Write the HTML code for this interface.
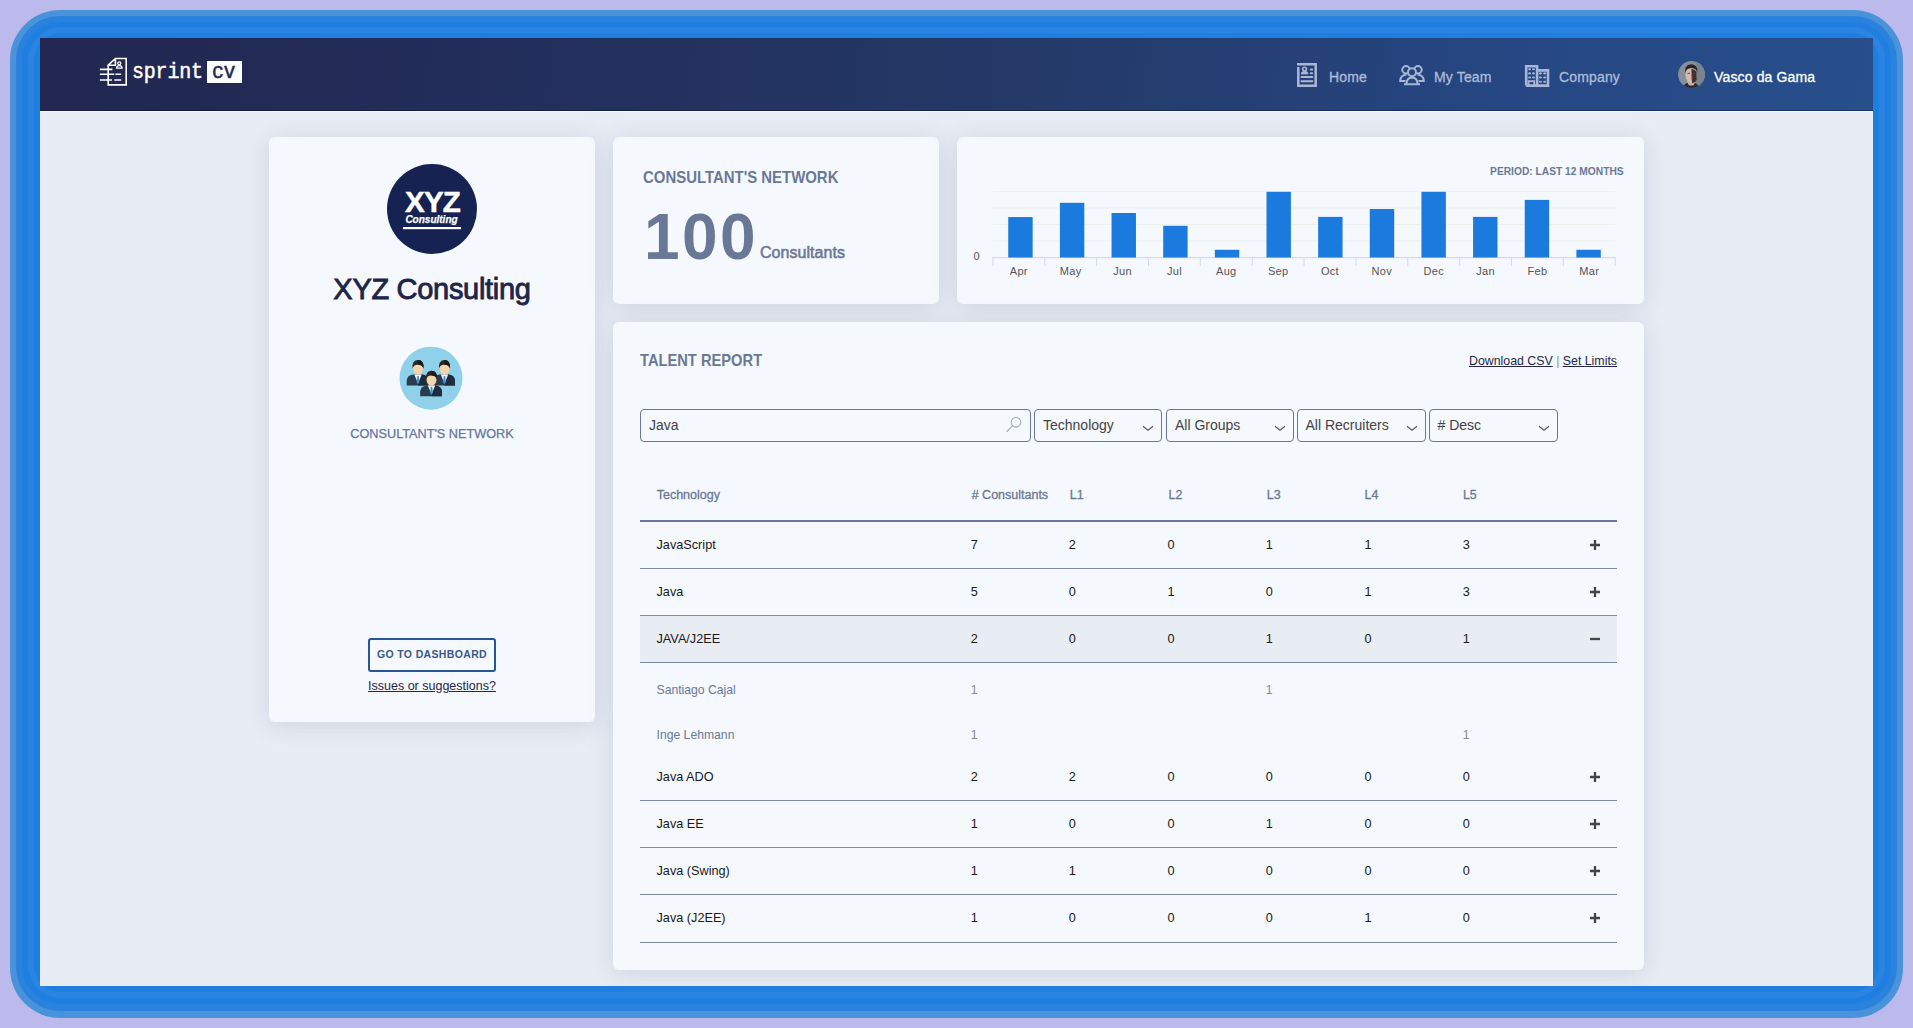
<!DOCTYPE html>
<html><head><meta charset="utf-8">
<style>
*{margin:0;padding:0;box-sizing:border-box}
html,body{width:1913px;height:1028px;overflow:hidden}
body{background:#bcb9ed;font-family:"Liberation Sans",sans-serif;position:relative}
.abs{position:absolute}
.b1{left:10px;top:10px;width:1893px;height:1008px;border-radius:50px;background:#4893d9}
.b2{left:6px;top:6px;right:6px;bottom:7px;border-radius:44px;background:#2a82de}
.b3{left:6px;top:6px;right:6px;bottom:7px;border-radius:38px;background:#1e7fe0}
.b4{left:6px;top:5px;right:6px;bottom:6px;border-radius:33px;background:#2c84e2}
.b5{left:6px;top:6px;right:6px;bottom:6px;border-radius:27px;background:#1e7fe0}
#app{left:40px;top:38px;width:1833px;height:948px;background:#e8ecf4;overflow:hidden}
#hdr{left:0;top:0;width:1833px;height:73px;background:linear-gradient(96deg,#212750 0%,#232f5c 30%,#243a69 55%,#264783 80%,#274f8c 100%);border-bottom:1px solid rgba(5,10,40,.4)}
#hdrline{left:0;top:73px;width:1833px;height:1px;background:#f4f7fb}
.card{position:absolute;background:#f5f8fc;border-radius:6px;box-shadow:0 3px 24px rgba(60,90,130,.16)}
.nav{position:absolute;top:0;height:73px;line-height:78px;font-size:14px;color:#aebbd8;-webkit-text-stroke:0.3px currentColor;letter-spacing:0.15px;white-space:nowrap}
</style></head><body>
<div class="abs b1"><div class="abs b2"><div class="abs b3"><div class="abs b4"><div class="abs b5"></div></div></div></div></div>
<div id="app" class="abs">

  <div id="hdr" class="abs">
    <svg class="abs" style="left:59px;top:19px" width="29" height="30" viewBox="0 0 29 30" fill="none" stroke="#fff" stroke-width="1.6">
      <path d="M16.4 1.5 H27.2 V27.9 H9.2 V8.2"/>
      <path d="M16.4 1.5 L9.2 8.2 H16.4 Z" stroke-linejoin="round"/>
      <circle cx="20.3" cy="6.3" r="1.5" stroke-width="1.3"/>
      <path d="M17.6 11.2 Q17.6 8.7 20.3 8.7 Q23 8.7 23 11.2 Z" stroke-width="1.3"/>
      <path d="M0.9 12.4 H13.4 M0.9 17.3 H15.3 M16.4 17.3 H22.2 M0.9 23 H13 M15.3 23 H22.2"/>
    </svg>
    <div class="abs" style="left:92px;top:21px;font-family:'Liberation Mono',monospace;font-size:20px;line-height:26px;color:#fff;-webkit-text-stroke:0.45px #fff;transform:scaleY(1.12);transform-origin:0 50%;letter-spacing:-0.2px">sprint</div>
    <div class="abs" style="left:167px;top:23px;width:35px;height:22px;background:#fff"></div>
    <div class="abs" style="left:172px;top:21px;font-family:'Liberation Mono',monospace;font-size:20px;line-height:26px;color:#222850;-webkit-text-stroke:0.45px #222850;transform:scaleY(1.12);transform-origin:0 50%;letter-spacing:-0.5px">cv</div>

    <svg class="abs" style="left:1256px;top:24px" width="22" height="26" viewBox="0 0 22 26" fill="none" stroke="#a9b7d5">
      <path d="M1 2.3 H19.7 V23.7 H2.3 V5" stroke-width="2.5"/>
      <circle cx="8.6" cy="7.1" r="1.9" stroke-width="1.6"/>
      <path d="M5.2 11.9 Q5.2 9.5 8.6 9.5 Q12 9.5 12 11.9 Z" fill="#a9b7d5" stroke-width="1"/>
      <path d="M14.8 7.6 H16.2 M14.8 11.3 H16.2 M5.5 15.1 H16.4 M5.5 19.3 H16.4" stroke-width="2" stroke-linecap="round"/>
    </svg>
    <div class="nav" style="left:1289px">Home</div>

    <svg class="abs" style="left:1358px;top:26px" width="28" height="22" viewBox="0 0 28 22" fill="none" stroke="#a9b7d5" stroke-width="2">
      <circle cx="8" cy="5.8" r="3.7"/>
      <circle cx="20" cy="5.8" r="3.7"/>
      <path d="M7.5 16.9 H2.2 Q2.4 11.2 8.6 10.6"/>
      <path d="M20.5 16.9 H25.8 Q25.6 11.2 19.4 10.6"/>
      <circle cx="14" cy="8.2" r="4" fill="#26467e"/>
      <path d="M8.4 20.1 Q8.6 13.6 14 13.5 Q19.4 13.6 19.6 20.1 Z" fill="#26467e" stroke="none"/>
      <path d="M6 20.2 H22 M8.4 20.1 Q8.6 13.6 14 13.5 Q19.4 13.6 19.6 20.1"/>
    </svg>
    <div class="nav" style="left:1394px">My Team</div>

    <svg class="abs" style="left:1484px;top:26px" width="26" height="24" viewBox="0 0 26 24" fill="none" stroke="#a9b7d5">
      <path d="M2.2 21.6 V2.2 H13.1 V21.6 M13.1 6.4 H24 V21.6 H2.2" stroke-width="2.6"/>
      <g fill="#a9b7d5" stroke="none">
        <ellipse cx="5.6" cy="5.3" rx="1.5" ry="1.05"/><ellipse cx="9.5" cy="5.3" rx="1.5" ry="1.05"/>
        <ellipse cx="5.6" cy="9.4" rx="1.5" ry="1.05"/><ellipse cx="9.5" cy="9.4" rx="1.5" ry="1.05"/>
        <ellipse cx="5.6" cy="13.5" rx="1.5" ry="1.05"/><ellipse cx="9.5" cy="13.5" rx="1.5" ry="1.05"/>
        <ellipse cx="16.5" cy="9.4" rx="1.5" ry="1.05"/><ellipse cx="20.6" cy="9.4" rx="1.5" ry="1.05"/>
        <ellipse cx="16.5" cy="13.5" rx="1.5" ry="1.05"/><ellipse cx="20.6" cy="13.5" rx="1.5" ry="1.05"/>
        <ellipse cx="16.5" cy="17.8" rx="1.5" ry="1.05"/><ellipse cx="20.6" cy="17.8" rx="1.5" ry="1.05"/>
      </g>
      <path d="M4.6 21 V17.2 H10.2 V21" stroke-width="1.8"/>
    </svg>
    <div class="nav" style="left:1519px">Company</div>

    <svg class="abs" style="left:1638px;top:22.8px" width="27" height="27" viewBox="0 0 27 27">
      <defs><clipPath id="av"><circle cx="13.5" cy="13.5" r="13.4"/></clipPath></defs>
      <g clip-path="url(#av)">
        <rect width="27" height="27" fill="#86909a"/>
        <rect x="18" width="9" height="27" fill="#7a8590"/>
        <path d="M5 27 Q6 21.5 13 21 Q20 21.5 21 27 Z" fill="#2c2a2a"/>
        <path d="M8.5 20 L11 24.5 L15.5 24.5 L17.5 20 Z" fill="#c9aea5"/>
        <ellipse cx="13" cy="13.5" rx="5.6" ry="8" fill="#d3bab0"/>
        <path d="M13.3 8 Q17 8 18.6 11 L18.6 19 Q17 22.5 14 22 L13.8 15 Z" fill="#3b3434"/>
        <path d="M13.6 13 L14.6 13 L14.8 19 L13.6 19 Z" fill="#8a2a28"/>
        <path d="M7 12 Q6.5 3.5 13 3.2 Q19.5 3.2 19.5 11 Q18.5 7.5 13.5 7 Q8.5 7.2 7 12 Z" fill="#2a2624"/>
        <path d="M9.5 12.3 H12 M14.8 12.3 H17" stroke="#4a3c38" stroke-width="0.9"/>
      </g>
    </svg>
    <div class="nav" style="left:1674px;color:#fff">Vasco da Gama</div>
  </div>
  <div id="hdrline" class="abs"></div>
  <!-- cards: positions relative to app (subtract 40,38) -->

  <div class="card" style="left:229px;top:99px;width:326px;height:585px">
    <svg class="abs" style="left:117px;top:26px" width="92" height="92" viewBox="0 0 92 92">
      <circle cx="46" cy="46" r="45" fill="#162252"/>
      <text x="46.5" y="49.3" text-anchor="middle" font-family="Liberation Sans" font-weight="bold" font-size="29.5" fill="#fff" stroke="#fff" stroke-width="0.5" letter-spacing="-0.8">XYZ</text>
      <text x="45.5" y="59.8" text-anchor="middle" font-family="Liberation Sans" font-weight="bold" font-style="italic" font-size="10" fill="#fff" stroke="#fff" stroke-width="0.25">Consulting</text>
      <rect x="17" y="64" width="58" height="2.2" fill="#fff"/>
    </svg>
    <div class="abs" style="left:0;top:135px;width:326px;text-align:center;font-size:29px;line-height:34px;color:#1f2448;-webkit-text-stroke:0.85px #1f2448;letter-spacing:-0.3px">XYZ Consulting</div>
    <svg class="abs" style="left:130px;top:209px" width="65" height="65" viewBox="0 0 65 65">
      <circle cx="32" cy="32.2" r="31.5" fill="#8fd0ea"/>
      <g id="person">
        <path d="M7.7 39.5 V35.5 Q7.9 29.2 14 28.6 H23.2 Q29.3 29.2 29.5 35.5 V39.5 Z" fill="#2a3b4e"/>
        <path d="M19 38 L22.6 28.6 H23.2 Q29.3 29.2 29.5 35.5 V39.5 H19 Z" fill="#1f2c3b"/>
        <path d="M15.3 28.6 L19 37.5 L22.7 28.6 Z" fill="#f4f4f4"/>
        <path d="M18.2 30 H19.8 L20.3 36 L19 38.2 L17.7 36 Z" fill="#3f92da"/>
        <ellipse cx="19" cy="23" rx="5" ry="5.8" fill="#f3d4ab"/>
        <path d="M13.5 22.5 Q12.8 14 19 14 Q25.2 14 24.5 22.5 Q23.5 18.5 19 18.7 Q14.5 18.5 13.5 22.5 Z" fill="#2a2a2a"/>
        <path d="M19 14 Q25.2 14 24.5 22.5 Q23.5 18.5 19 18.7 Z" fill="#1a1a1a"/>
      </g>
      <use href="#person" x="26.5" y="0"/>
      <use href="#person" x="13.5" y="10.8"/>
    </svg>
    <div class="abs" style="left:0;top:289px;width:326px;text-align:center;font-size:12.7px;line-height:16px;color:#64769a;-webkit-text-stroke:0.25px #64769a">CONSULTANT'S NETWORK</div>
    <div class="abs" style="left:99px;top:501px;width:128px;height:34px;border:2px solid #2a5594;border-radius:3px;text-align:center;font-size:10.5px;line-height:28.5px;font-weight:bold;letter-spacing:0.35px;white-space:nowrap;color:#3a5a8a">GO TO DASHBOARD</div>
    <div class="abs" style="left:0;top:541px;width:326px;text-align:center;font-size:12.5px;line-height:16px;color:#25284a;text-decoration:underline">Issues or suggestions?</div>
  </div>

  <div class="card" style="left:573px;top:99px;width:326px;height:166.5px">
    <div class="abs" style="left:30px;top:29.5px;font-size:16.5px;line-height:20px;font-weight:bold;color:#6a7898;white-space:nowrap;transform:scaleX(0.905);transform-origin:0 0">CONSULTANT'S NETWORK</div>
    <div class="abs" style="left:31px;top:65px;font-size:64px;line-height:70px;font-weight:bold;color:#6a7898;letter-spacing:2.4px">100</div>
    <div class="abs" style="left:147px;top:106px;font-size:16px;line-height:20px;color:#6a7898;-webkit-text-stroke:0.55px #6a7898;letter-spacing:0.05px">Consultants</div>
  </div>

  <div class="card" style="left:917px;top:99px;width:687px;height:166.5px">
    <svg class="abs" style="left:0;top:0" width="687" height="166" viewBox="0 0 687 166"><rect x="35.90" y="103.50" width="622.32" height="1" fill="#eef0ec"/><rect x="35.90" y="87.00" width="622.32" height="1" fill="#eef0ec"/><rect x="35.90" y="70.50" width="622.32" height="1" fill="#eef0ec"/><rect x="35.90" y="54.00" width="622.32" height="1" fill="#eef0ec"/><rect x="35.40" y="120.00" width="623.32" height="1.2" fill="#d3dbe8"/><rect x="35.40" y="120.50" width="1" height="8.5" fill="#d3dbe8"/><rect x="87.26" y="120.50" width="1" height="8.5" fill="#d3dbe8"/><rect x="139.12" y="120.50" width="1" height="8.5" fill="#d3dbe8"/><rect x="190.98" y="120.50" width="1" height="8.5" fill="#d3dbe8"/><rect x="242.84" y="120.50" width="1" height="8.5" fill="#d3dbe8"/><rect x="294.70" y="120.50" width="1" height="8.5" fill="#d3dbe8"/><rect x="346.56" y="120.50" width="1" height="8.5" fill="#d3dbe8"/><rect x="398.42" y="120.50" width="1" height="8.5" fill="#d3dbe8"/><rect x="450.28" y="120.50" width="1" height="8.5" fill="#d3dbe8"/><rect x="502.14" y="120.50" width="1" height="8.5" fill="#d3dbe8"/><rect x="554.00" y="120.50" width="1" height="8.5" fill="#d3dbe8"/><rect x="605.86" y="120.50" width="1" height="8.5" fill="#d3dbe8"/><rect x="657.72" y="120.50" width="1" height="8.5" fill="#d3dbe8"/><rect x="51.25" y="80.05" width="24.4" height="40.45" fill="#1a7ade"/><text x="61.83" y="138.00" text-anchor="middle" font-family="Liberation Sans" font-size="11" letter-spacing="0.3" fill="#555">Apr</text><rect x="102.90" y="65.80" width="24.4" height="54.70" fill="#1a7ade"/><text x="113.69" y="138.00" text-anchor="middle" font-family="Liberation Sans" font-size="11" letter-spacing="0.3" fill="#555">May</text><rect x="154.55" y="76.00" width="24.4" height="44.50" fill="#1a7ade"/><text x="165.55" y="138.00" text-anchor="middle" font-family="Liberation Sans" font-size="11" letter-spacing="0.3" fill="#555">Jun</text><rect x="206.20" y="88.80" width="24.4" height="31.70" fill="#1a7ade"/><text x="217.41" y="138.00" text-anchor="middle" font-family="Liberation Sans" font-size="11" letter-spacing="0.3" fill="#555">Jul</text><rect x="257.85" y="112.80" width="24.4" height="7.70" fill="#1a7ade"/><text x="269.27" y="138.00" text-anchor="middle" font-family="Liberation Sans" font-size="11" letter-spacing="0.3" fill="#555">Aug</text><rect x="309.50" y="54.80" width="24.4" height="65.70" fill="#1a7ade"/><text x="321.13" y="138.00" text-anchor="middle" font-family="Liberation Sans" font-size="11" letter-spacing="0.3" fill="#555">Sep</text><rect x="361.15" y="79.90" width="24.4" height="40.60" fill="#1a7ade"/><text x="372.99" y="138.00" text-anchor="middle" font-family="Liberation Sans" font-size="11" letter-spacing="0.3" fill="#555">Oct</text><rect x="412.80" y="72.00" width="24.4" height="48.50" fill="#1a7ade"/><text x="424.85" y="138.00" text-anchor="middle" font-family="Liberation Sans" font-size="11" letter-spacing="0.3" fill="#555">Nov</text><rect x="464.45" y="54.80" width="24.4" height="65.70" fill="#1a7ade"/><text x="476.71" y="138.00" text-anchor="middle" font-family="Liberation Sans" font-size="11" letter-spacing="0.3" fill="#555">Dec</text><rect x="516.10" y="79.90" width="24.4" height="40.60" fill="#1a7ade"/><text x="528.57" y="138.00" text-anchor="middle" font-family="Liberation Sans" font-size="11" letter-spacing="0.3" fill="#555">Jan</text><rect x="567.75" y="62.90" width="24.4" height="57.60" fill="#1a7ade"/><text x="580.43" y="138.00" text-anchor="middle" font-family="Liberation Sans" font-size="11" letter-spacing="0.3" fill="#555">Feb</text><rect x="619.40" y="112.80" width="24.4" height="7.70" fill="#1a7ade"/><text x="632.29" y="138.00" text-anchor="middle" font-family="Liberation Sans" font-size="11" letter-spacing="0.3" fill="#555">Mar</text><text x="19.50" y="123.00" text-anchor="middle" font-family="Liberation Sans" font-size="11" fill="#555">0</text></svg>
    <div class="abs" style="right:20px;top:26.5px;font-size:11px;line-height:14px;font-weight:bold;color:#6a7898;white-space:nowrap;transform:scaleX(0.93);transform-origin:100% 0">PERIOD: LAST 12 MONTHS</div>
  </div>

  <div class="card" style="left:573px;top:284px;width:1031px;height:648px">
    <div class="abs" style="left:27px;top:27.7px;font-size:16.5px;line-height:20px;font-weight:bold;color:#6a7898;white-space:nowrap;transform:scaleX(0.89);transform-origin:0 0">TALENT REPORT</div>
    <div class="abs" style="right:27px;top:31px;font-size:12.35px;line-height:16px;color:#25284a;white-space:nowrap"><span style="text-decoration:underline">Download CSV</span> <span style="color:#8a90a0">|</span> <span style="text-decoration:underline">Set Limits</span></div>
    <div class="abs" style="left:27px;top:87px;width:391px;height:33px;border:1.3px solid #6a7898;border-radius:4px"></div>
    <div class="abs" style="left:36px;top:87px;height:33px;line-height:33px;font-size:14px;color:#444">Java</div>
    <svg class="abs" style="left:391px;top:93px" width="20" height="20" viewBox="0 0 20 20" fill="none" stroke="#a3a8b4" stroke-width="1.1"><circle cx="12" cy="7.3" r="4.8"/><path d="M8.6 10.7 L2.5 16.8"/></svg>
    <div class="abs" style="left:421px;top:87px;width:128px;height:33px;border:1.3px solid #6a7898;border-radius:4px"></div>
    <div class="abs" style="left:430px;top:87px;height:33px;line-height:33px;font-size:14px;color:#444;white-space:nowrap">Technology</div>
    <svg class="abs" style="left:529px;top:103px" width="12" height="7" viewBox="0 0 12 7" fill="none" stroke="#555" stroke-width="1.1"><path d="M1 1.2 L6 5.2 L11 1.2"/></svg>
    <div class="abs" style="left:553px;top:87px;width:128px;height:33px;border:1.3px solid #6a7898;border-radius:4px"></div>
    <div class="abs" style="left:562px;top:87px;height:33px;line-height:33px;font-size:14px;color:#444;white-space:nowrap">All Groups</div>
    <svg class="abs" style="left:661px;top:103px" width="12" height="7" viewBox="0 0 12 7" fill="none" stroke="#555" stroke-width="1.1"><path d="M1 1.2 L6 5.2 L11 1.2"/></svg>
    <div class="abs" style="left:683.5px;top:87px;width:129px;height:33px;border:1.3px solid #6a7898;border-radius:4px"></div>
    <div class="abs" style="left:692.5px;top:87px;height:33px;line-height:33px;font-size:14px;color:#444;white-space:nowrap">All Recruiters</div>
    <svg class="abs" style="left:792.5px;top:103px" width="12" height="7" viewBox="0 0 12 7" fill="none" stroke="#555" stroke-width="1.1"><path d="M1 1.2 L6 5.2 L11 1.2"/></svg>
    <div class="abs" style="left:815.5px;top:87px;width:129px;height:33px;border:1.3px solid #6a7898;border-radius:4px"></div>
    <div class="abs" style="left:824.5px;top:87px;height:33px;line-height:33px;font-size:14px;color:#444;white-space:nowrap"># Desc</div>
    <svg class="abs" style="left:924.5px;top:103px" width="12" height="7" viewBox="0 0 12 7" fill="none" stroke="#555" stroke-width="1.1"><path d="M1 1.2 L6 5.2 L11 1.2"/></svg>
    <div class="abs" style="left:43.7px;top:166px;line-height:15px;font-size:12.5px;color:#6a7898;-webkit-text-stroke:0.3px #6a7898;white-space:nowrap">Technology</div>
    <div class="abs" style="left:358.7px;top:166px;line-height:15px;font-size:12.5px;color:#6a7898;-webkit-text-stroke:0.3px #6a7898;white-space:nowrap"># Consultants</div>
    <div class="abs" style="left:456.7px;top:166px;line-height:15px;font-size:12.5px;color:#6a7898;-webkit-text-stroke:0.3px #6a7898;white-space:nowrap">L1</div>
    <div class="abs" style="left:555.5px;top:166px;line-height:15px;font-size:12.5px;color:#6a7898;-webkit-text-stroke:0.3px #6a7898;white-space:nowrap">L2</div>
    <div class="abs" style="left:653.7px;top:166px;line-height:15px;font-size:12.5px;color:#6a7898;-webkit-text-stroke:0.3px #6a7898;white-space:nowrap">L3</div>
    <div class="abs" style="left:751.6px;top:166px;line-height:15px;font-size:12.5px;color:#6a7898;-webkit-text-stroke:0.3px #6a7898;white-space:nowrap">L4</div>
    <div class="abs" style="left:849.9px;top:166px;line-height:15px;font-size:12.5px;color:#6a7898;-webkit-text-stroke:0.3px #6a7898;white-space:nowrap">L5</div>
    <div class="abs" style="left:27px;top:198px;width:977px;height:2px;background:#6a7898"></div>
    <div class="abs" style="left:27px;top:293px;width:977px;height:47px;background:#e8ecf3"></div>
    <div class="abs" style="left:27px;top:246px;width:977px;height:1.2px;background:#7d8aa6"></div>
    <div class="abs" style="left:27px;top:293px;width:977px;height:1.2px;background:#7d8aa6"></div>
    <div class="abs" style="left:27px;top:340px;width:977px;height:1.2px;background:#7d8aa6"></div>
    <div class="abs" style="left:27px;top:478px;width:977px;height:1.2px;background:#7d8aa6"></div>
    <div class="abs" style="left:27px;top:525px;width:977px;height:1.2px;background:#7d8aa6"></div>
    <div class="abs" style="left:27px;top:572px;width:977px;height:1.2px;background:#7d8aa6"></div>
    <div class="abs" style="left:27px;top:620px;width:977px;height:1.2px;background:#7d8aa6"></div>
    <div class="abs" style="left:43.5px;top:214.5px;line-height:16px;font-size:12.7px;color:#1a1a1a;white-space:nowrap">JavaScript</div>
    <div class="abs" style="left:357.7px;top:214.5px;line-height:16px;font-size:12.7px;color:#1a1a1a;white-space:nowrap">7</div>
    <div class="abs" style="left:455.7px;top:214.5px;line-height:16px;font-size:12.7px;color:#1a1a1a;white-space:nowrap">2</div>
    <div class="abs" style="left:554.5px;top:214.5px;line-height:16px;font-size:12.7px;color:#1a1a1a;white-space:nowrap">0</div>
    <div class="abs" style="left:652.7px;top:214.5px;line-height:16px;font-size:12.7px;color:#1a1a1a;white-space:nowrap">1</div>
    <div class="abs" style="left:751.4px;top:214.5px;line-height:16px;font-size:12.7px;color:#1a1a1a;white-space:nowrap">1</div>
    <div class="abs" style="left:849.7px;top:214.5px;line-height:16px;font-size:12.7px;color:#1a1a1a;white-space:nowrap">3</div>
    <svg class="abs" style="left:975.5px;top:216.8px" width="12" height="12" viewBox="0 0 12 12"><path d="M6 1 V11 M1 6 H11" stroke="#444" stroke-width="2.3"/></svg>
    <div class="abs" style="left:43.5px;top:261.5px;line-height:16px;font-size:12.7px;color:#1a1a1a;white-space:nowrap">Java</div>
    <div class="abs" style="left:357.7px;top:261.5px;line-height:16px;font-size:12.7px;color:#1a1a1a;white-space:nowrap">5</div>
    <div class="abs" style="left:455.7px;top:261.5px;line-height:16px;font-size:12.7px;color:#1a1a1a;white-space:nowrap">0</div>
    <div class="abs" style="left:554.5px;top:261.5px;line-height:16px;font-size:12.7px;color:#1a1a1a;white-space:nowrap">1</div>
    <div class="abs" style="left:652.7px;top:261.5px;line-height:16px;font-size:12.7px;color:#1a1a1a;white-space:nowrap">0</div>
    <div class="abs" style="left:751.4px;top:261.5px;line-height:16px;font-size:12.7px;color:#1a1a1a;white-space:nowrap">1</div>
    <div class="abs" style="left:849.7px;top:261.5px;line-height:16px;font-size:12.7px;color:#1a1a1a;white-space:nowrap">3</div>
    <svg class="abs" style="left:975.5px;top:263.8px" width="12" height="12" viewBox="0 0 12 12"><path d="M6 1 V11 M1 6 H11" stroke="#444" stroke-width="2.3"/></svg>
    <div class="abs" style="left:43.5px;top:308.5px;line-height:16px;font-size:12.7px;color:#1a1a1a;white-space:nowrap">JAVA/J2EE</div>
    <div class="abs" style="left:357.7px;top:308.5px;line-height:16px;font-size:12.7px;color:#1a1a1a;white-space:nowrap">2</div>
    <div class="abs" style="left:455.7px;top:308.5px;line-height:16px;font-size:12.7px;color:#1a1a1a;white-space:nowrap">0</div>
    <div class="abs" style="left:554.5px;top:308.5px;line-height:16px;font-size:12.7px;color:#1a1a1a;white-space:nowrap">0</div>
    <div class="abs" style="left:652.7px;top:308.5px;line-height:16px;font-size:12.7px;color:#1a1a1a;white-space:nowrap">1</div>
    <div class="abs" style="left:751.4px;top:308.5px;line-height:16px;font-size:12.7px;color:#1a1a1a;white-space:nowrap">0</div>
    <div class="abs" style="left:849.7px;top:308.5px;line-height:16px;font-size:12.7px;color:#1a1a1a;white-space:nowrap">1</div>
    <svg class="abs" style="left:975.5px;top:310.8px" width="12" height="12" viewBox="0 0 12 12"><path d="M1 6 H11" stroke="#444" stroke-width="2.3"/></svg>
    <div class="abs" style="left:43.5px;top:446.5px;line-height:16px;font-size:12.7px;color:#1a1a1a;white-space:nowrap">Java ADO</div>
    <div class="abs" style="left:357.7px;top:446.5px;line-height:16px;font-size:12.7px;color:#1a1a1a;white-space:nowrap">2</div>
    <div class="abs" style="left:455.7px;top:446.5px;line-height:16px;font-size:12.7px;color:#1a1a1a;white-space:nowrap">2</div>
    <div class="abs" style="left:554.5px;top:446.5px;line-height:16px;font-size:12.7px;color:#1a1a1a;white-space:nowrap">0</div>
    <div class="abs" style="left:652.7px;top:446.5px;line-height:16px;font-size:12.7px;color:#1a1a1a;white-space:nowrap">0</div>
    <div class="abs" style="left:751.4px;top:446.5px;line-height:16px;font-size:12.7px;color:#1a1a1a;white-space:nowrap">0</div>
    <div class="abs" style="left:849.7px;top:446.5px;line-height:16px;font-size:12.7px;color:#1a1a1a;white-space:nowrap">0</div>
    <svg class="abs" style="left:975.5px;top:448.8px" width="12" height="12" viewBox="0 0 12 12"><path d="M6 1 V11 M1 6 H11" stroke="#444" stroke-width="2.3"/></svg>
    <div class="abs" style="left:43.5px;top:493.5px;line-height:16px;font-size:12.7px;color:#1a1a1a;white-space:nowrap">Java EE</div>
    <div class="abs" style="left:357.7px;top:493.5px;line-height:16px;font-size:12.7px;color:#1a1a1a;white-space:nowrap">1</div>
    <div class="abs" style="left:455.7px;top:493.5px;line-height:16px;font-size:12.7px;color:#1a1a1a;white-space:nowrap">0</div>
    <div class="abs" style="left:554.5px;top:493.5px;line-height:16px;font-size:12.7px;color:#1a1a1a;white-space:nowrap">0</div>
    <div class="abs" style="left:652.7px;top:493.5px;line-height:16px;font-size:12.7px;color:#1a1a1a;white-space:nowrap">1</div>
    <div class="abs" style="left:751.4px;top:493.5px;line-height:16px;font-size:12.7px;color:#1a1a1a;white-space:nowrap">0</div>
    <div class="abs" style="left:849.7px;top:493.5px;line-height:16px;font-size:12.7px;color:#1a1a1a;white-space:nowrap">0</div>
    <svg class="abs" style="left:975.5px;top:495.8px" width="12" height="12" viewBox="0 0 12 12"><path d="M6 1 V11 M1 6 H11" stroke="#444" stroke-width="2.3"/></svg>
    <div class="abs" style="left:43.5px;top:540.5px;line-height:16px;font-size:12.7px;color:#1a1a1a;white-space:nowrap">Java (Swing)</div>
    <div class="abs" style="left:357.7px;top:540.5px;line-height:16px;font-size:12.7px;color:#1a1a1a;white-space:nowrap">1</div>
    <div class="abs" style="left:455.7px;top:540.5px;line-height:16px;font-size:12.7px;color:#1a1a1a;white-space:nowrap">1</div>
    <div class="abs" style="left:554.5px;top:540.5px;line-height:16px;font-size:12.7px;color:#1a1a1a;white-space:nowrap">0</div>
    <div class="abs" style="left:652.7px;top:540.5px;line-height:16px;font-size:12.7px;color:#1a1a1a;white-space:nowrap">0</div>
    <div class="abs" style="left:751.4px;top:540.5px;line-height:16px;font-size:12.7px;color:#1a1a1a;white-space:nowrap">0</div>
    <div class="abs" style="left:849.7px;top:540.5px;line-height:16px;font-size:12.7px;color:#1a1a1a;white-space:nowrap">0</div>
    <svg class="abs" style="left:975.5px;top:542.8px" width="12" height="12" viewBox="0 0 12 12"><path d="M6 1 V11 M1 6 H11" stroke="#444" stroke-width="2.3"/></svg>
    <div class="abs" style="left:43.5px;top:587.5px;line-height:16px;font-size:12.7px;color:#1a1a1a;white-space:nowrap">Java (J2EE)</div>
    <div class="abs" style="left:357.7px;top:587.5px;line-height:16px;font-size:12.7px;color:#1a1a1a;white-space:nowrap">1</div>
    <div class="abs" style="left:455.7px;top:587.5px;line-height:16px;font-size:12.7px;color:#1a1a1a;white-space:nowrap">0</div>
    <div class="abs" style="left:554.5px;top:587.5px;line-height:16px;font-size:12.7px;color:#1a1a1a;white-space:nowrap">0</div>
    <div class="abs" style="left:652.7px;top:587.5px;line-height:16px;font-size:12.7px;color:#1a1a1a;white-space:nowrap">0</div>
    <div class="abs" style="left:751.4px;top:587.5px;line-height:16px;font-size:12.7px;color:#1a1a1a;white-space:nowrap">1</div>
    <div class="abs" style="left:849.7px;top:587.5px;line-height:16px;font-size:12.7px;color:#1a1a1a;white-space:nowrap">0</div>
    <svg class="abs" style="left:975.5px;top:589.8px" width="12" height="12" viewBox="0 0 12 12"><path d="M6 1 V11 M1 6 H11" stroke="#444" stroke-width="2.3"/></svg>
    <div class="abs" style="left:43.5px;top:359.5px;line-height:16px;font-size:12.2px;color:#6a7898;white-space:nowrap">Santiago Cajal</div>
    <div class="abs" style="left:357.7px;top:359.5px;line-height:16px;font-size:12.2px;color:#858a94;white-space:nowrap">1</div>
    <div class="abs" style="left:652.7px;top:359.5px;line-height:16px;font-size:12.2px;color:#858a94;white-space:nowrap">1</div>
    <div class="abs" style="left:43.5px;top:404.5px;line-height:16px;font-size:12.2px;color:#6a7898;white-space:nowrap">Inge Lehmann</div>
    <div class="abs" style="left:357.7px;top:404.5px;line-height:16px;font-size:12.2px;color:#858a94;white-space:nowrap">1</div>
    <div class="abs" style="left:849.7px;top:404.5px;line-height:16px;font-size:12.2px;color:#858a94;white-space:nowrap">1</div>
  </div>
</div>
</body></html>
